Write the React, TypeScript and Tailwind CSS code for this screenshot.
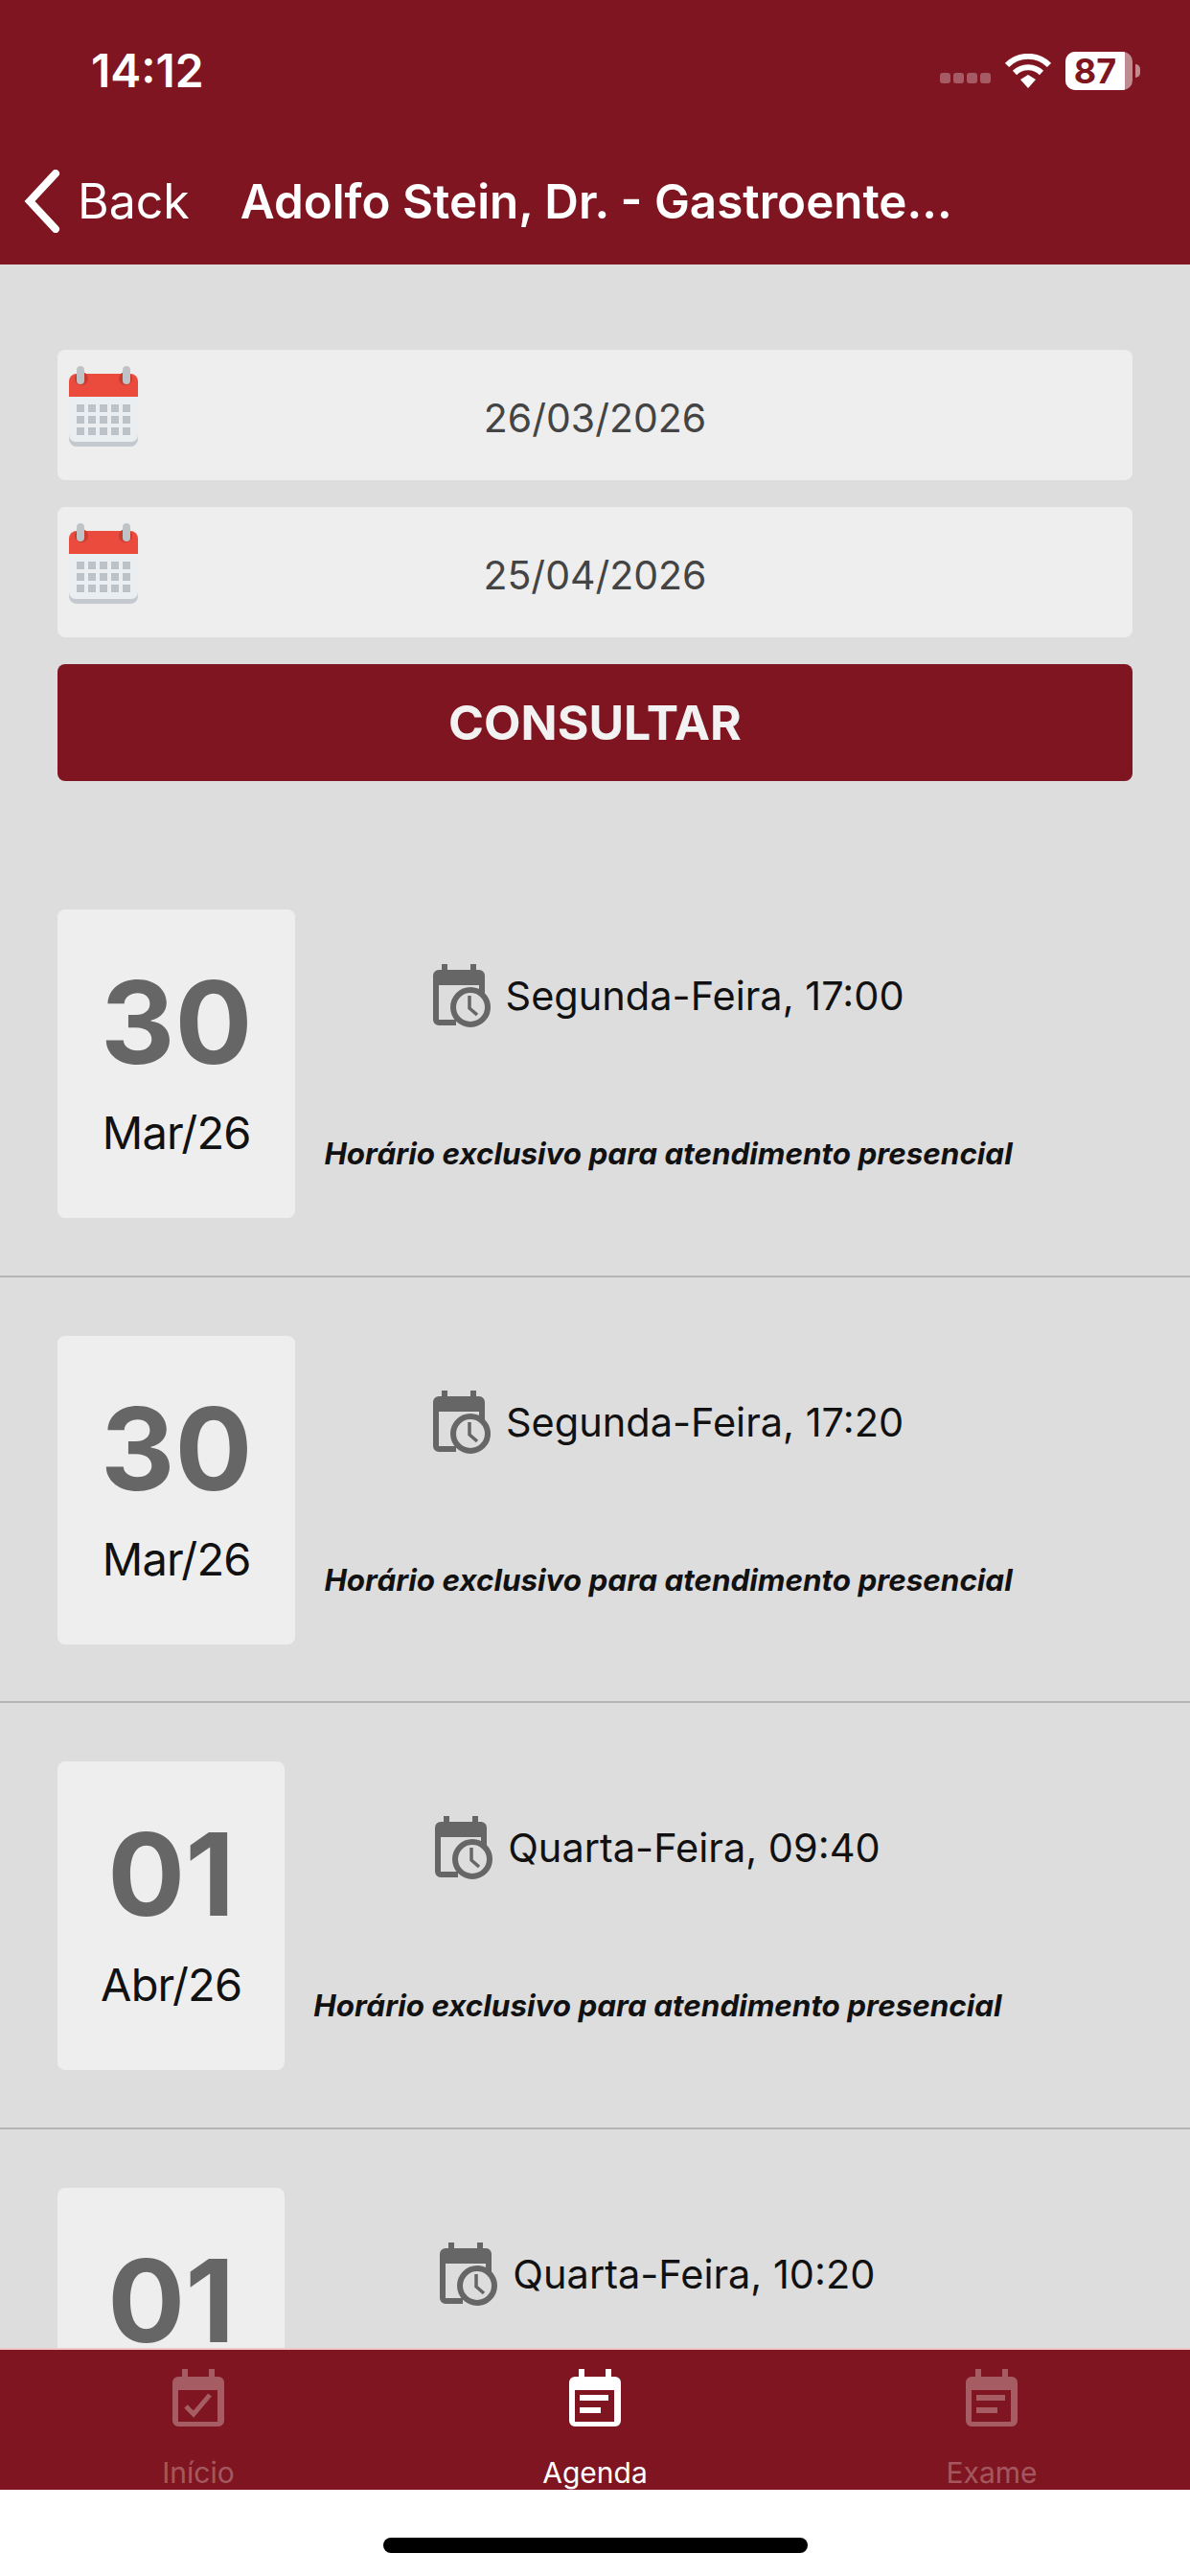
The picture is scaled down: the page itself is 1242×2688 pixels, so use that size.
import React from "react";

function DateIcon() {
  return (
    <svg width="72" height="84" viewBox="0 0 72 84" className="shrink-0">
      <path d="M0 72h72v4a8 8 0 0 1-8 8H8a8 8 0 0 1-8-8z" fill="#c3c9ce" />
      <path d="M0 32h72v40a7 7 0 0 1-7 7H7a7 7 0 0 1-7-7z" fill="#ebeef0" />
      <path d="M8 8h56a8 8 0 0 1 8 8v16H0V16a8 8 0 0 1 8-8z" fill="#ea4b3c" />
      <rect x="6" y="6" width="14" height="14" rx="7" fill="#c63c30" />
      <rect x="52" y="6" width="14" height="14" rx="7" fill="#c63c30" />
      <rect x="8" y="0" width="8" height="19" rx="4" fill="#bfc3c6" />
      <rect x="56" y="0" width="8" height="19" rx="4" fill="#bfc3c6" />
      {[0, 1, 2].map((r) =>
        [0, 1, 2, 3, 4].map((c) => (
          <rect key={`${r}-${c}`} x={8 + c * 12} y={40 + r * 12} width="8" height="8" fill="#bcc3c8" />
        ))
      )}
    </svg>
  );
}

function ClockCalendar() {
  return (
    <svg width="60" height="66" viewBox="0 0 60 66" className="shrink-0">
      <path
        fillRule="evenodd"
        d="M9 0h6v6h24V0h6v6h3a6 6 0 0 1 6 6v26H48V22H6v36h18v6H6a6 6 0 0 1-6-6V12a6 6 0 0 1 6-6h3z"
        fill="#666666"
      />
      <circle cx="39" cy="45" r="18" fill="#dddddd" stroke="#666666" strokeWidth="6" />
      <path d="M38 33v13l8 7" fill="none" stroke="#666666" strokeWidth="3.5" />
    </svg>
  );
}

function TabIcon({ kind }: { kind: "check" | "note" }) {
  const hole = "M6 22h41v33H6z";
  const outer =
    "M10 0h6v8h22V0h6v8h4a6 6 0 0 1 6 6v40a6 6 0 0 1-6 6H6a6 6 0 0 1-6-6V14a6 6 0 0 1 6-6h4z";
  const bars = "M11 27h30v6H11zM11 40h22v6H11z";
  return (
    <svg width="54" height="60" viewBox="0 0 54 60">
      <path fillRule="evenodd" d={`${outer}${hole}`} fill="#ffffff" />
      {kind === "note" ? (
        <path d={bars} fill="#ffffff" />
      ) : (
        <path d="M14 39l8 8 17-20" fill="none" stroke="#ffffff" strokeWidth="5" />
      )}
    </svg>
  );
}

const rows = [
  { d: "30", m: "Mar/26", t: "Segunda-Feira, 17:00" },
  { d: "30", m: "Mar/26", t: "Segunda-Feira, 17:20" },
  { d: "01", m: "Abr/26", t: "Quarta-Feira, 09:40" },
  { d: "01", m: "Abr/26", t: "Quarta-Feira, 10:20" },
];

function Row({ d, m, t }: { d: string; m: string; t: string }) {
  return (
    <div className="flex shrink-0 items-start gap-[30px] border-b-2 border-[#b4b4b4] pl-[60px] pt-[61px] pb-[59.6px]">
      <div className="flex h-[322px] flex-col items-center rounded-[8px] bg-[#eeeeee] px-[45px] pt-[53px]">
        <div className="text-[120px] leading-[130px] font-bold text-[#666666]">{d}</div>
        <div className="mt-[21px] text-[47px] leading-[58px] tracking-[-0.8px] text-[#111111]">{m}</div>
      </div>
      <div className="flex flex-col items-center pt-[57px]">
        <div className="flex items-center gap-[16px]">
          <ClockCalendar />
          <span className="text-[41.5px] leading-[50px] text-[#111111]">{t}</span>
        </div>
        <div className="mt-[114px] text-[31.4px] leading-[36px] font-bold italic text-[#111111]">
          Horário exclusivo para atendimento presencial
        </div>
      </div>
    </div>
  );
}

export default function App() {
  return (
    <div
      className="flex h-[2688px] w-[1242px] flex-col overflow-hidden bg-white"
      style={{ fontFamily: "Inter, 'Liberation Sans', sans-serif" }}
    >
      <header className="h-[276px] shrink-0 bg-[#7f1520] text-white">
        <div className="flex h-[177px] items-start justify-between pl-[95px] pr-[52px] pt-[47px]">
          <span className="text-[48px] leading-[54px] font-semibold">14:12</span>
          <div className="flex items-center pt-[7px]">
            <div className="mt-[14px] flex gap-[3px]">
              {[0, 1, 2, 3].map((i) => (
                <span key={i} className="h-[11px] w-[11px] rounded-[3px] bg-white/30" />
              ))}
            </div>
            <svg width="48" height="36" viewBox="0 0 48 36" className="ml-[15px]">
              <path d="M2 12a31 31 0 0 1 44 0" fill="none" stroke="#fff" strokeWidth="6" />
              <path d="M10 20a20 20 0 0 1 28 0" fill="none" stroke="#fff" strokeWidth="6" />
              <path d="M16 27l8-5 8 5-8 9z" fill="#fff" />
            </svg>
            <div className="relative ml-[15px] flex h-[40px] w-[70px] overflow-hidden rounded-[10px] bg-white/50">
              <div className="flex h-full w-[62px] items-center justify-center bg-white text-[36px] leading-none font-bold text-[#7f1520]">
                87
              </div>
            </div>
            <div className="ml-[3px] h-[14px] w-[5px] rounded-r-full bg-white/50" />
          </div>
        </div>
        <div className="flex items-center">
          <svg width="40" height="66" viewBox="0 0 40 66" className="ml-[24px]">
            <path d="M34 4L7 33l27 29" fill="none" stroke="#fff" strokeWidth="8" strokeLinecap="round" />
          </svg>
          <span className="ml-[17px] text-[50px] leading-[60px]">Back</span>
          <span className="ml-[53px] text-[49.3px] leading-[60px] font-semibold">
            Adolfo Stein, Dr. - Gastroente...
          </span>
        </div>
      </header>

      <main className="flex min-h-0 flex-1 flex-col overflow-hidden bg-[#dddddd]">
        <div className="flex shrink-0 flex-col gap-[28px] px-[60px] pt-[89px] pb-[73px]">
          {["26/03/2026", "25/04/2026"].map((v) => (
            <div key={v} className="relative flex h-[136px] items-center justify-center rounded-[8px] bg-[#eeeeee] pt-[7px]">
              <div className="absolute left-[12px] top-[17px]">
                <DateIcon />
              </div>
              <span className="text-[41px] text-[#444444]">{v}</span>
            </div>
          ))}
          <button className="flex h-[122px] items-center justify-center rounded-[8px] bg-[#7f1520] text-[50px] font-bold text-[#f2f2f2]">
            CONSULTAR
          </button>
        </div>
        {rows.map((r, i) => (
          <Row key={i} {...r} />
        ))}
      </main>

      <nav className="grid h-[148px] shrink-0 grid-cols-3 border-t-2 border-[#f0c8c8] bg-[#7f1520]">
        {[
          { l: "Início", k: "check" as const, a: false },
          { l: "Agenda", k: "note" as const, a: true },
          { l: "Exame", k: "note" as const, a: false },
        ].map((t) => (
          <div key={t.l} className={`flex flex-col items-center pt-[20px] ${t.a ? "text-white" : "text-white/30"}`}>
            <div className={t.a ? "" : "opacity-30"}>
              <TabIcon kind={t.k} />
            </div>
            <span className="mt-[30px] text-[30px] leading-[36px]">{t.l}</span>
          </div>
        ))}
      </nav>

      <div className="flex h-[90px] shrink-0 justify-center bg-white pt-[50px]">
        <div className="h-[16px] w-[443px] rounded-full bg-black" />
      </div>
    </div>
  );
}
